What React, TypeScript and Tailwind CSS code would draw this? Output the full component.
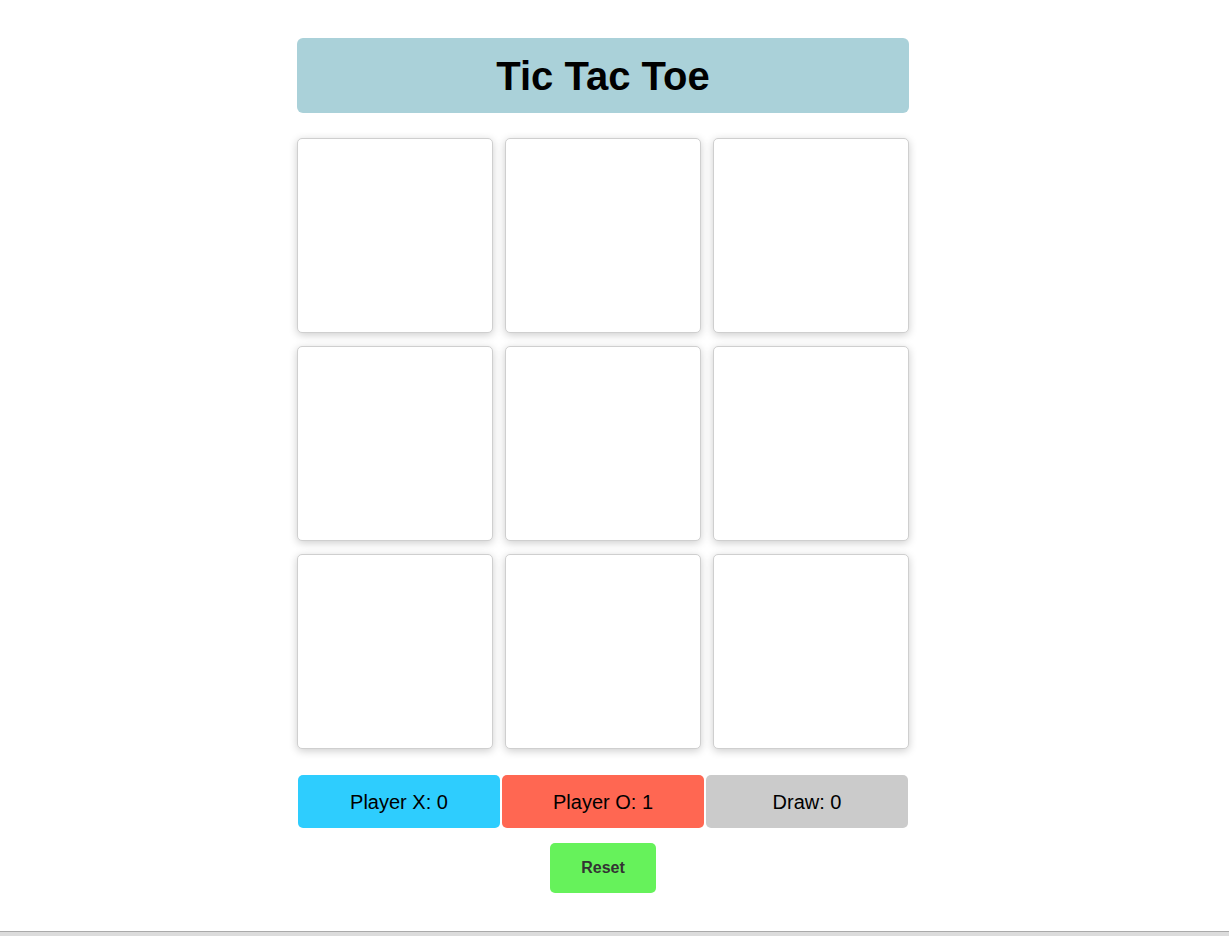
import { useState } from 'react'

type Cell = 'X' | 'O' | null

const FONT = { fontFamily: '"Liberation Sans", Arial, sans-serif' }

export default function App() {
  const [board, setBoard] = useState<Cell[]>(Array(9).fill(null))
  const [turn, setTurn] = useState<'X' | 'O'>('X')
  const [scores] = useState({ x: 0, o: 1, draw: 0 })

  const play = (i: number) => {
    if (board[i]) return
    const next = [...board]
    next[i] = turn
    setBoard(next)
    setTurn(turn === 'X' ? 'O' : 'X')
  }

  return (
    <div className="min-h-[936px] flex flex-col bg-white text-black" style={FONT}>
      <div className="flex-1 flex justify-center pr-[23px]">
        <div className="w-[612px] mt-[38px] flex flex-col">
          <div className="h-[75px] rounded-md bg-[#aad1d9] flex items-center justify-center">
            <h1 className="text-[40px] font-bold leading-none">Tic Tac Toe</h1>
          </div>

          <div className="mt-[25px] grid grid-cols-3 gap-x-[12px] gap-y-[13px]">
            {board.map((c, i) => (
              <button
                key={i}
                onClick={() => play(i)}
                className="h-[195px] rounded-[5px] border border-[#cfcfcf] bg-white shadow-[0_2px_8px_rgba(0,0,0,0.2)] text-6xl font-bold"
              >
                {c}
              </button>
            ))}
          </div>

          <div className="mt-[26px] flex gap-[2px] px-px">
            <div className="flex-1 h-[53px] rounded-[5px] bg-[#2ecdfe] flex items-center justify-center text-xl">
              Player X: {scores.x}
            </div>
            <div className="flex-1 h-[53px] rounded-[5px] bg-[#ff6752] flex items-center justify-center text-xl">
              Player O: {scores.o}
            </div>
            <div className="flex-1 h-[53px] rounded-[5px] bg-[#cbcbcb] flex items-center justify-center text-xl">
              Draw: {scores.draw}
            </div>
          </div>

          <div className="mt-[15px] flex justify-center">
            <button
              onClick={() => setBoard(Array(9).fill(null))}
              className="w-[106px] h-[50px] rounded-[5px] bg-[#66f25b] text-[#333] font-bold text-base"
            >
              Reset
            </button>
          </div>
        </div>
      </div>
      <div className="h-[5px] border-t border-[#aaa] bg-[#dcdcdc]" />
    </div>
  )
}
